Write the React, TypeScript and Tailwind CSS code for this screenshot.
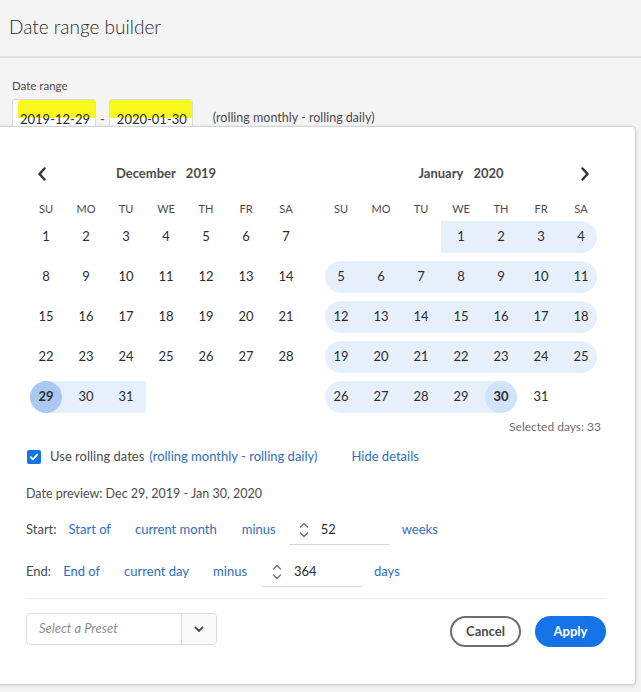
import React from "react";

type Cell = {
  day: number | null;
  inRange?: boolean;
  roundL?: boolean;
  roundR?: boolean;
  circle?: "strong" | "light";
};

const DAYS = ["SU", "MO", "TU", "WE", "TH", "FR", "SA"];

function buildDec(): Cell[][] {
  const rows: Cell[][] = [];
  let d = 1;
  for (let r = 0; r < 5; r++) {
    const row: Cell[] = [];
    for (let c = 0; c < 7; c++) {
      if (d > 31) {
        row.push({ day: null });
      } else {
        const cell: Cell = { day: d };
        if (d >= 29) {
          cell.inRange = true;
          if (d === 29) {
            cell.roundL = true;
            cell.circle = "strong";
          }
        }
        row.push(cell);
      }
      d++;
    }
    rows.push(row);
  }
  return rows;
}

function buildJan(): Cell[][] {
  const rows: Cell[][] = [];
  let d = -2;
  for (let r = 0; r < 5; r++) {
    const row: Cell[] = [];
    for (let c = 0; c < 7; c++) {
      if (d < 1 || d > 31) {
        row.push({ day: null });
      } else {
        const cell: Cell = { day: d };
        if (d <= 30) {
          cell.inRange = true;
          if (c === 0) cell.roundL = true;
          if (c === 6) cell.roundR = true;
          if (d === 30) {
            cell.roundR = true;
            cell.circle = "light";
          }
        }
        row.push(cell);
      }
      d++;
    }
    rows.push(row);
  }
  return rows;
}

function DayCell({ cell }: { cell: Cell }) {
  return (
    <div className="relative flex h-10 w-10 items-center justify-center">
      {cell.inRange && (
        <div
          className={`absolute top-1 bottom-1 bg-[#e6f0fc] ${
            cell.roundL ? "left-1 rounded-l-full" : "left-0"
          } ${cell.roundR ? "right-1 rounded-r-full" : "right-0"}`}
        />
      )}
      {cell.circle && (
        <div
          className={`absolute left-1 top-1 h-8 w-8 rounded-full ${
            cell.circle === "strong" ? "bg-[#a9c9f1]" : "bg-[#d1e3f8]"
          }`}
        />
      )}
      {cell.day !== null && (
        <span
          className={`relative text-[13px] text-[#2c2c2c] ${
            cell.circle ? "font-bold" : ""
          }`}
        >
          {cell.day}
        </span>
      )}
    </div>
  );
}

function ChevronLeft() {
  return (
    <svg width="10" height="14" viewBox="0 0 10 14">
      <path d="M7.5 1.5 L2.5 7 L7.5 12.5" fill="none" stroke="#323232" strokeWidth="2.4" strokeLinecap="round" strokeLinejoin="round" />
    </svg>
  );
}

function ChevronRight() {
  return (
    <svg width="10" height="14" viewBox="0 0 10 14">
      <path d="M2.5 1.5 L7.5 7 L2.5 12.5" fill="none" stroke="#323232" strokeWidth="2.4" strokeLinecap="round" strokeLinejoin="round" />
    </svg>
  );
}

function Month({ name, year, rows, nav }: { name: string; year: string; rows: Cell[][]; nav: "left" | "right" }) {
  return (
    <div className="w-[280px]">
      <div className="relative flex h-6 items-center justify-center">
        {nav === "left" && (
          <div className="absolute left-[11px] top-[5px]">
            <ChevronLeft />
          </div>
        )}
        {nav === "right" && (
          <div className="absolute right-[11px] top-[5px]">
            <ChevronRight />
          </div>
        )}
        <span className="text-[13px] font-bold text-[#4b4b4b]">
          {name}
          <span className="ml-[10px]">{year}</span>
        </span>
      </div>
      <div className="mt-[15px] grid h-4 grid-cols-7 items-center">
        {DAYS.map((d) => (
          <div key={d} className="text-center text-[11px] text-[#4b4b4b]">
            {d}
          </div>
        ))}
      </div>
      <div className="flex flex-col">
        {rows.map((row, i) => (
          <div key={i} className="flex">
            {row.map((c, j) => (
              <DayCell key={j} cell={c} />
            ))}
          </div>
        ))}
      </div>
    </div>
  );
}

function Stepper() {
  return (
    <svg width="10" height="20" viewBox="0 0 10 20">
      <path d="M1.5 7 L5 3.5 L8.5 7" fill="none" stroke="#6e6e6e" strokeWidth="1.3" strokeLinecap="round" strokeLinejoin="round" />
      <path d="M1.5 13 L5 16.5 L8.5 13" fill="none" stroke="#6e6e6e" strokeWidth="1.3" strokeLinecap="round" strokeLinejoin="round" />
    </svg>
  );
}

function NumField({ value }: { value: string }) {
  return (
    <div className="flex h-[30px] w-[100px] items-center border-b border-[#d6d6d6] pl-[10px]">
      <Stepper />
      <span className="ml-[12px] text-[13px] text-[#2c2c2c]">{value}</span>
    </div>
  );
}

export default function App() {
  const dec = buildDec();
  const jan = buildJan();
  return (
    <div
      className="relative h-[692px] w-[641px] overflow-hidden bg-[#f4f4f4] text-[#2c2c2c]"
      style={{ fontFamily: "Lato, 'Open Sans', sans-serif" }}
    >
      {/* Header */}
      <div className="flex h-[58px] items-center border-b-2 border-[#e2e2e2] pl-[9px] pb-[2px]">
        <h1 className="text-[19px] font-light text-[#2c2c2c]">Date range builder</h1>
      </div>

      {/* Body */}
      <div className="px-3 pt-[20px]">
        <div className="text-[11.5px] leading-4 text-[#4b4b4b]">Date range</div>
        <div className="mt-[5px] flex items-start">
          <div className="relative h-[30px] w-[84px] rounded-t-[3px] border border-[#dcdcdc] bg-white">
            <div className="absolute left-[5px] right-0 top-0 h-[18px] rounded-tl-[3px] bg-[#f8f81f]" />
            <span className="absolute left-[7px] top-[10px] text-[13px] text-[#2c2c2c]">2019-12-29</span>
          </div>
          <span className="mx-[4px] mt-[11px] text-[13px] text-[#4b4b4b]">-</span>
          <div className="relative h-[30px] w-[84px] rounded-t-[3px] border border-[#dcdcdc] bg-white">
            <div className="absolute left-0 right-0 top-0 h-[18px] bg-[#f8f81f]" />
            <span className="absolute left-[7px] top-[10px] text-[13px] text-[#2c2c2c]">2020-01-30</span>
          </div>
          <span className="ml-[20px] mt-[10px] text-[12.5px] text-[#4b4b4b]">(rolling monthly - rolling daily)</span>
        </div>
      </div>

      {/* Popover */}
      <div className="absolute left-[-4px] top-[126px] h-[559px] w-[640px] rounded-[4px] border border-[#d2d2d2] bg-white pl-[29px] pt-[35px] shadow-[0_1px_4px_rgba(0,0,0,0.12)]">
        <div className="w-[580px]">
          <div className="flex gap-[15px]">
            <Month name="December" year="2019" rows={dec} nav="left" />
            <Month name="January" year="2020" rows={jan} nav="right" />
          </div>
          <div className="flex h-5 w-[575px] items-center justify-end text-[12px] text-[#6e6e6e]">
            Selected days: 33
          </div>

          <div className="mt-[10px] flex h-5 items-center text-[13px]">
            <div className="ml-[1px] flex h-[14px] w-[14px] items-center justify-center rounded-[2px] bg-[#1473e6]">
              <svg width="10" height="10" viewBox="0 0 10 10">
                <path d="M1.8 5.2 L4 7.4 L8.2 2.6" fill="none" stroke="white" strokeWidth="1.8" strokeLinecap="round" strokeLinejoin="round" />
              </svg>
            </div>
            <span className="ml-[9px] text-[#4b4b4b]">Use rolling dates</span>
            <span className="ml-[5px] text-[#2d6ebf]">(rolling monthly - rolling daily)</span>
            <span className="ml-[34px] text-[#2d6ebf]">Hide details</span>
          </div>

          <div className="mt-[17px] flex h-5 items-center text-[12.5px] text-[#4b4b4b]">
            Date preview: Dec 29, 2019 - Jan 30, 2020
          </div>

          <div className="mt-[10px] flex h-8 items-center text-[13px]">
            <span className="text-[#4b4b4b]">Start:</span>
            <span className="ml-[12px] text-[#2d6ebf]">Start of</span>
            <span className="ml-[24px] text-[#2d6ebf]">current month</span>
            <span className="ml-[25px] text-[#2d6ebf]">minus</span>
            <div className="ml-[13px]">
              <NumField value="52" />
            </div>
            <span className="ml-[13px] text-[#2d6ebf]">weeks</span>
          </div>

          <div className="mt-[10px] flex h-8 items-center text-[13px]">
            <span className="text-[#4b4b4b]">End:</span>
            <span className="ml-[12px] text-[#2d6ebf]">End of</span>
            <span className="ml-[24px] text-[#2d6ebf]">current day</span>
            <span className="ml-[24px] text-[#2d6ebf]">minus</span>
            <div className="ml-[15px]">
              <NumField value="364" />
            </div>
            <span className="ml-[12px] text-[#2d6ebf]">days</span>
          </div>

          <div className="mt-[10px] border-t border-[#ebebeb]" />

          <div className="mt-[14px] flex items-start justify-between">
            <div className="flex h-[32px] w-[191px] overflow-hidden rounded-[4px] border border-[#dcdcdc] bg-white">
              <div className="flex flex-1 items-center pl-[12px] text-[13px] italic text-[#8e8e8e]">Select a Preset</div>
              <div className="flex w-[35px] items-center justify-center border-l border-[#dcdcdc] bg-[#fafafa]">
                <svg width="10" height="7" viewBox="0 0 10 7">
                  <path d="M1.5 1.5 L5 5 L8.5 1.5" fill="none" stroke="#4b4b4b" strokeWidth="1.8" strokeLinecap="round" strokeLinejoin="round" />
                </svg>
              </div>
            </div>
            <div className="mt-[3px] flex gap-[14px]">
              <button className="flex h-[31px] w-[71px] items-center justify-center rounded-full border-2 border-[#6e6e6e] bg-white text-[13px] font-bold text-[#4b4b4b]">
                Cancel
              </button>
              <button className="flex h-[31px] w-[71px] items-center justify-center rounded-full bg-[#1473e6] text-[13px] font-bold text-white">
                Apply
              </button>
            </div>
          </div>
        </div>
      </div>
    </div>
  );
}
